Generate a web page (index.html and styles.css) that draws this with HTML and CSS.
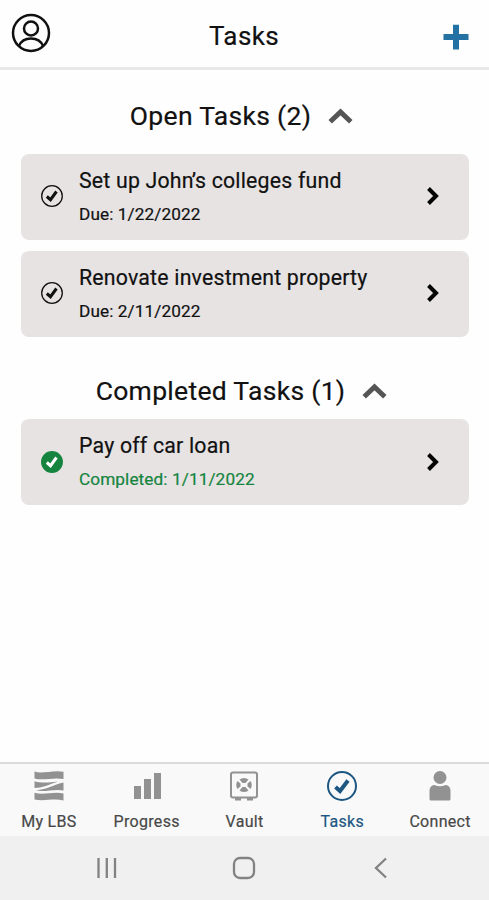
FILE: index.html
```
<!DOCTYPE html>
<html lang="en">
<head>
<meta charset="UTF-8">
<title>Tasks</title>
<link rel="stylesheet" href="styles.css">
</head>

<body>
<header class="header">
  <svg class="profile" width="40" height="40" viewBox="0 0 40 40">
    <circle cx="20" cy="20" r="18"/>
    <circle cx="20" cy="15.500" r="7"/>
    <path d="M8 33 C10 28 14.500 25.500 20 25.500 S30 28 32 33"/>
  </svg>
  <h1 class="title">Tasks</h1>
  <svg class="add" width="26" height="26" viewBox="0 0 26 26">
    <path d="M10 .8h6V10h9.500v6H16v9.500h-6V16H.5v-6H10z"/>
  </svg>
</header>

<main class="content">
  <h2 class="section">Open Tasks (2)
    <svg class="collapse" width="25" height="16" viewBox="0 0 25 16"><path d="M2.200 13.800 12.500 4 22.800 13.800"/></svg>
  </h2>
  <ul class="tasks">
    <li class="task">
      <svg class="check" width="24" height="24" viewBox="0 0 24 24"><circle cx="12" cy="12" r="10.300"/><path d="M6.800 12.500 10.500 15.700 16.500 7.500"/></svg>
      <div class="info">
        <div class="name">Set up Joh<span class="tight">n’</span>s colleges fund</div>
        <div class="date">Due: 1/22/2022</div>
      </div>
      <svg class="more" width="14" height="20" viewBox="0 0 14 20"><path d="M2.500 2.500 10 10 2.500 17.500"/></svg>
    </li>
    <li class="task">
      <svg class="check" width="24" height="24" viewBox="0 0 24 24"><circle cx="12" cy="12" r="10.300"/><path d="M6.800 12.500 10.500 15.700 16.500 7.500"/></svg>
      <div class="info">
        <div class="name">Renovate investment property</div>
        <div class="date">Due: 2/11/2022</div>
      </div>
      <svg class="more" width="14" height="20" viewBox="0 0 14 20"><path d="M2.500 2.500 10 10 2.500 17.500"/></svg>
    </li>
  </ul>

  <h2 class="section completed">Completed Tasks (1)
    <svg class="collapse" width="25" height="16" viewBox="0 0 25 16"><path d="M2.200 13.800 12.500 4 22.800 13.800"/></svg>
  </h2>
  <ul class="tasks">
    <li class="task done">
      <svg class="check" width="24" height="24" viewBox="0 0 24 24"><circle cx="12" cy="12" r="10.300"/><path d="M6.800 12.500 10.500 15.700 16.500 7.500"/></svg>
      <div class="info">
        <div class="name">Pay off car loan</div>
        <div class="date">Completed: 1/11/2022</div>
      </div>
      <svg class="more" width="14" height="20" viewBox="0 0 14 20"><path d="M2.500 2.500 10 10 2.500 17.500"/></svg>
    </li>
  </ul>
</main>

<nav class="tabs">
  <a class="tab">
    <svg width="32" height="32" viewBox="0 0 32 32">
      <path d="M1.500 1.500C9 4.500 20-.5 30.500 1.800V9C20 7 11 11 1.500 8.500zM1.500 11.200C9 13.500 16 12.500 25 11.500 16 14.500 9 18 1.500 18zM30.500 12.500V20.500C22 18.500 11 22.500 3 20.300 14 19.500 22 14 30.500 12.500zM1.500 22.800C11 25.500 21 21 30.500 23.500V30.500C20 28 11 31.800 1.500 29.500z"/>
    </svg>
    <span>My LBS</span>
  </a>
  <a class="tab">
    <svg width="32" height="32" viewBox="0 0 32 32"><path d="M3 16h7v13H3zM13 9h7v20h-7zM23 3h7v26h-7z"/></svg>
    <span>Progress</span>
  </a>
  <a class="tab">
    <svg width="32" height="32" viewBox="0 0 32 32">
      <rect class="line" x="3" y="2.500" width="26" height="25" rx="2"/>
      <path d="M7 28h6v2.500H7zM19 28h6v2.500h-6z"/>
      <path d="M11.500 9.500Q16 6.500 20.500 9.500L17.500 13h-3zM11.500 20.500Q16 23.500 20.500 20.500L17.500 17h-3zM9.500 11Q7 15 9.500 19L12.500 16.500v-3zM22.500 11Q25 15 22.500 19L19.500 16.500v-3z"/>
    </svg>
    <span>Vault</span>
  </a>
  <a class="tab active">
    <svg width="32" height="32" viewBox="0 0 32 32"><circle cx="16" cy="16" r="14"/><path d="M9.500 17 14 21 22 10.500"/></svg>
    <span>Tasks</span>
  </a>
  <a class="tab">
    <svg width="32" height="32" viewBox="0 0 32 32"><circle cx="16" cy="7.500" r="6.500"/><path d="M5.500 29v-7.500Q5.500 15 10.500 15 16 17.500 21.500 15q5 0 5 6.500V29q0 1.500-1.500 1.500H7Q5.500 30.500 5.500 29z"/></svg>
    <span>Connect</span>
  </a>
</nav>

<!-- Android navigation buttons -->
<footer class="system">
  <svg width="24" height="24" viewBox="0 0 24 24"><path d="M3.500 2v20M11.800 2v20M20 2v20"/></svg>
  <svg width="24" height="24" viewBox="0 0 24 24"><rect x="2" y="2" width="20" height="20" rx="6"/></svg>
  <svg width="24" height="24" viewBox="0 0 24 24"><path d="M17 2.500 7 12 17 21.500"/></svg>
</footer>
</body>
</html>
```
FILE: styles.css
```
* {
    box-sizing: border-box;
}
body {
    margin: 0;
    height: 900px;
    display: flex;
    flex-direction: column;
    background: #fefefe;
    color: #111;
    font-family: Roboto, "Liberation Sans", sans-serif;
    -webkit-text-stroke: .2px;
    overflow: hidden;
}
svg {
    display: block;
    flex: none;
    fill: none;
}

/* Top bar */
.header {
    height: 70px;
    padding: 0 20px 2px 11px;
    display: grid;
    grid-template-columns: 60px 1fr 60px;
    align-items: center;
    border-bottom: 3px solid #e8e8e8;
}
.profile {
    stroke: #111;
    stroke-width: 2.5;
}
.title {
    margin: 7px 0 0 8px;
    text-align: center;
    font-size: 26px;
    font-weight: 400;
    letter-spacing: .4px;
}
.add {
    justify-self: end;
    margin-top: 8px;
    fill: #2471a3;
}

/* Task lists */
.content {
    flex: 1;
    padding: 30px 20px 0 21px;
}
.section {
    margin: 0 0 23.5px;
    padding-right: 7px;
    height: 30px;
    display: flex;
    justify-content: center;
    align-items: center;
    gap: 17px;
    font-size: 26.5px;
    font-weight: 400;
    letter-spacing: .3px;
    white-space: nowrap;
}
.completed {
    margin: 38.5px 0 14px;
}
.collapse {
    margin-top: 2px;
    stroke: #555;
    stroke-width: 5;
}
.tasks {
    margin: 0;
    padding: 0;
    display: grid;
    gap: 11px;
    list-style: none;
}
.task {
    height: 86px;
    padding: 0 29px 1px 19px;
    display: flex;
    align-items: center;
    border-radius: 8px;
    background: #e7e3e3;
}
.check {
    stroke: #111;
    stroke-width: 1.3;
}
.check path {
    stroke-width: 3;
}
.info {
    flex: 1;
    margin-left: 15px;
    white-space: nowrap;
}
.name {
    font-size: 21.3px;
    line-height: 28px;
    letter-spacing: .2px;
}
.tight {
    letter-spacing: -1px;
}
.date {
    margin-top: 7px;
    font-size: 17.2px;
    line-height: 24px;
    letter-spacing: .1px;
}
.more {
    stroke: #050505;
    stroke-width: 4;
}
.done .check circle {
    fill: #15843e;
    stroke: #15843e;
}
.done .check path {
    stroke: #fff;
}
.done .date {
    color: #15843e;
}

/* Bottom tabs */
.tabs {
    height: 74px;
    padding-top: 6px;
    display: grid;
    grid-template-columns: repeat(5, 1fr);
    border-top: 2px solid #dcdcdc;
    background: #f9f9f9;
}
.tab {
    display: flex;
    flex-direction: column;
    align-items: center;
    gap: 9px;
    color: #484848;
    font-size: 16px;
    line-height: 22px;
    letter-spacing: .3px;
}
.tab svg {
    fill: #929292;
}
.tab .line {
    fill: none;
    stroke: #929292;
    stroke-width: 2;
}
.active {
    color: #1c5681;
}
.tab.active svg {
    fill: none;
    stroke: #1c5681;
    stroke-width: 2;
}
.active path {
    stroke-width: 4;
}

.system {
    height: 64px;
    padding: 0 96px 0 95px;
    display: flex;
    justify-content: space-between;
    align-items: center;
    background: #f0f0f0;
}
.system svg {
    stroke: #828282;
    stroke-width: 2.3;
}
```
